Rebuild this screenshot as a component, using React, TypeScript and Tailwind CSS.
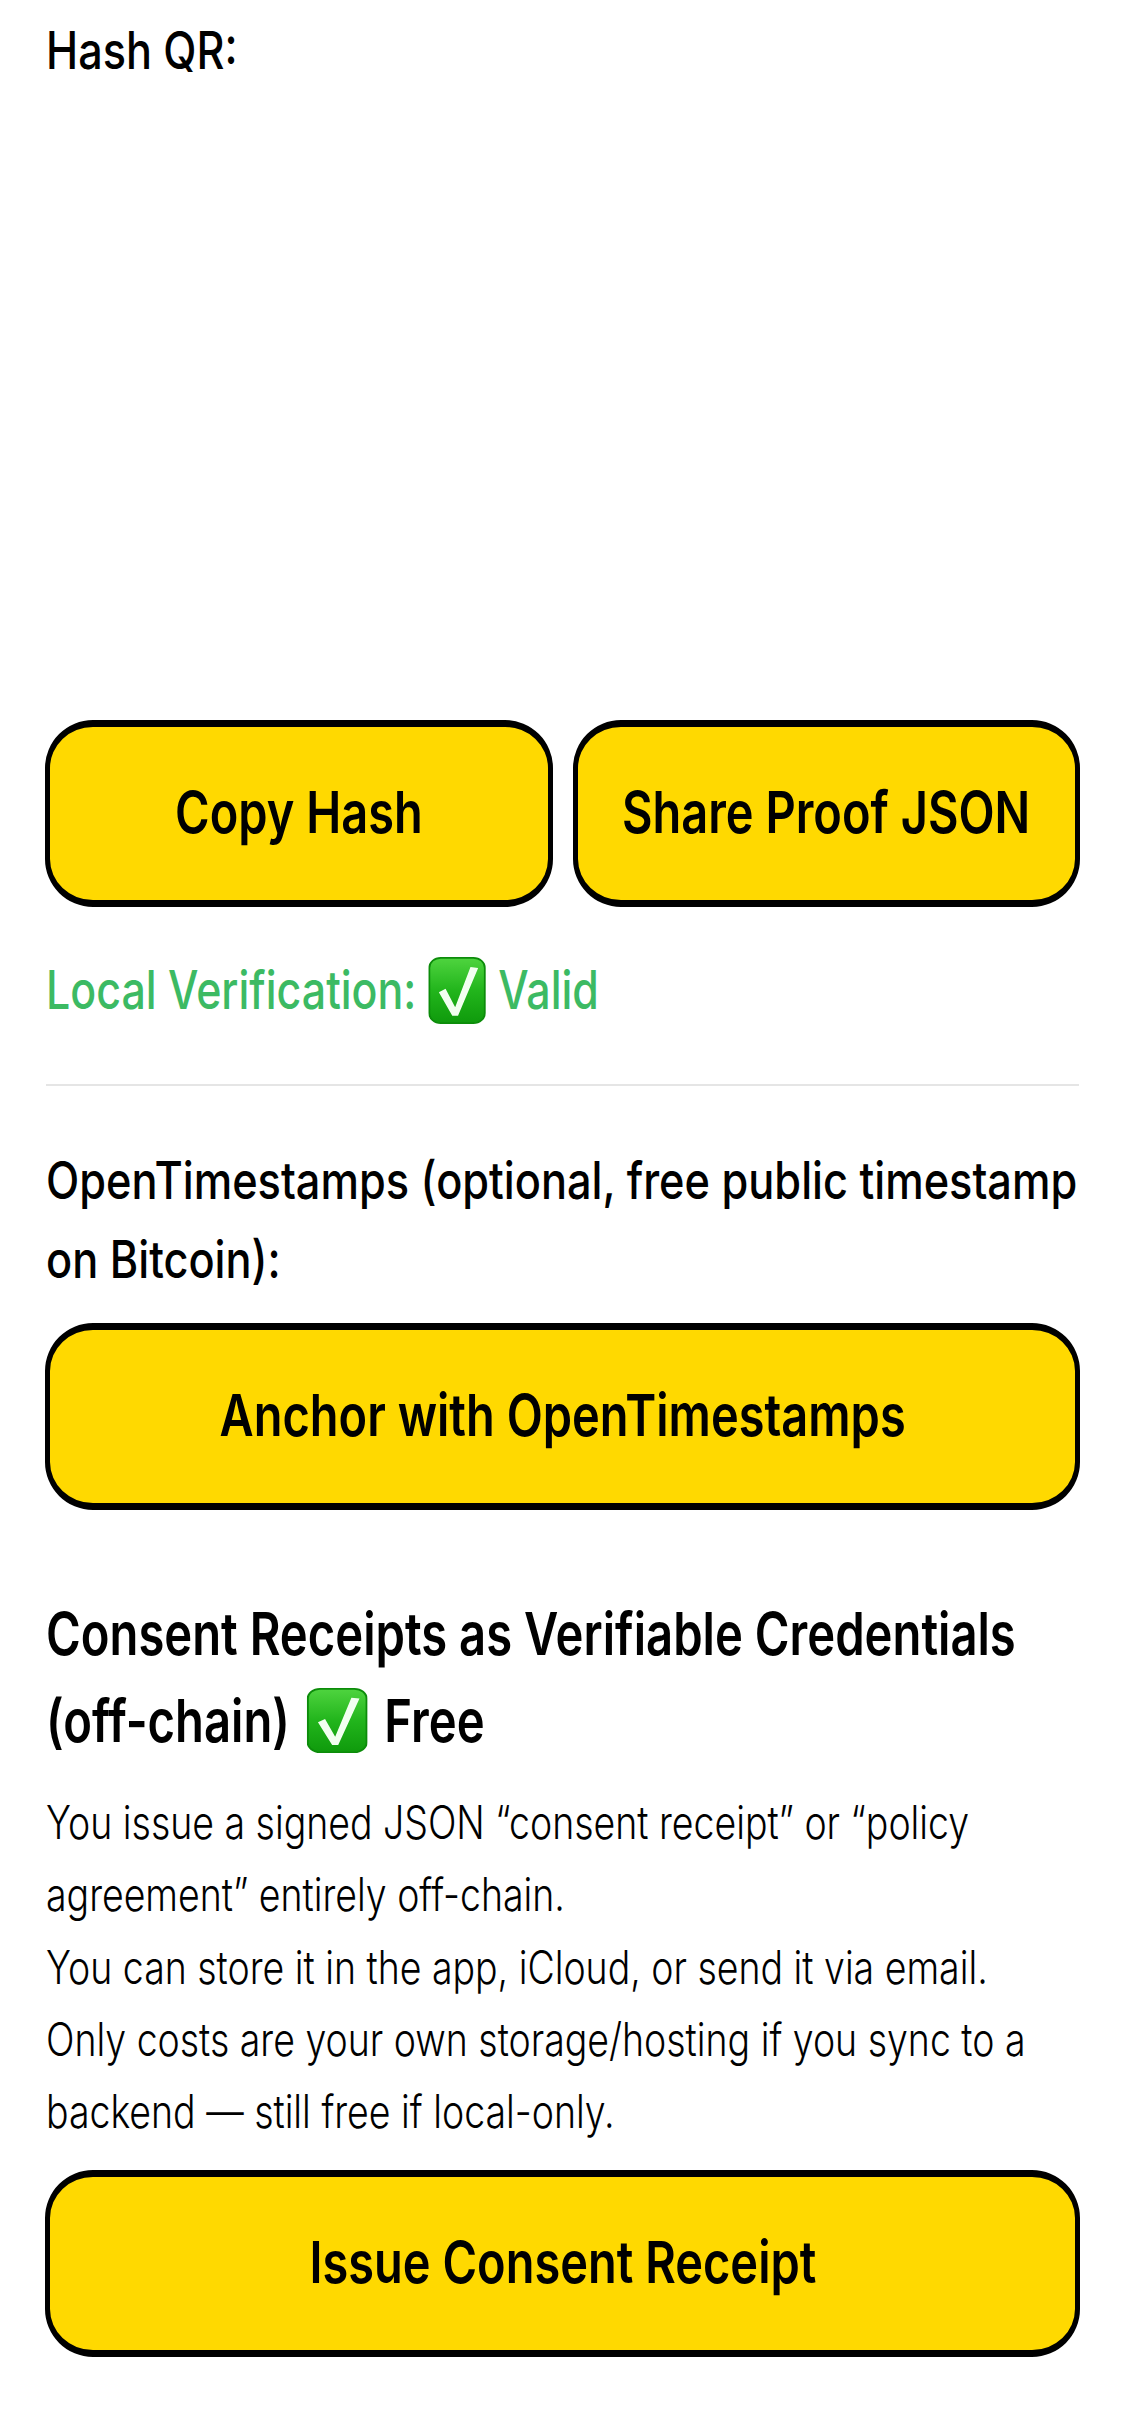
function Check({ className }: { className: string }) {
  return (
    <svg viewBox="0 0 60 80" preserveAspectRatio="none" className={className} aria-hidden="true">
      <defs>
        <linearGradient id="g" x1="0" y1="0" x2="0" y2="1">
          <stop offset="0" stopColor="#4fd43f" />
          <stop offset="0.5" stopColor="#22b51c" />
          <stop offset="1" stopColor="#0f9a0c" />
        </linearGradient>
      </defs>
      <rect x="1" y="1" width="58" height="78" rx="12" fill="url(#g)" stroke="#0c8c0a" strokeWidth="2" />
      <path d="M11 42 L18 38 L28 60 L44 12 L52 13 L31 70 L25 70 Z" fill="#f2fff0" />
    </svg>
  );
}

function Btn({ children, className = "" }: { children: string; className?: string }) {
  return (
    <button className={`flex h-[187px] min-w-0 items-center justify-center rounded-[48px] border-x-[5px] border-y-[7px] border-black bg-[#ffd900] pb-[3px] text-[58px] leading-none font-semibold text-black ${className}`}>
      <span className="inline-block scale-x-[.81] whitespace-nowrap">{children}</span>
    </button>
  );
}

export default function App() {
  return (
    <div className="min-h-[2436px] w-[1125px] overflow-hidden bg-white px-[46px] text-black font-['Inter',sans-serif]">
      <p className="h-[720px] w-[1200px] origin-left scale-x-[.83] pt-[21px] text-[52px] leading-[60px] font-medium">Hash QR:</p>
      <div className="-mx-[1px] grid grid-cols-2 gap-[20px]">
        <Btn>Copy Hash</Btn>
        <Btn>Share Proof JSON</Btn>
      </div>
      <p className="mt-[48px] flex h-[70px] w-[1200px] origin-left scale-x-[.81] items-center gap-[15px] text-[53px] leading-[70px] font-medium text-[#3cba63]">
        <span>Local Verification:</span>
        <Check className="h-[67px] w-[71px]" />
        <span>Valid</span>
      </p>
      <div className="mt-[59px] h-[2px] bg-[#e5e5e5]" />
      <p className="mt-[55px] w-[1300px] origin-left scale-x-[.833] text-[52px] leading-[79px] font-medium">
        OpenTimestamps (optional, free public timestamp
        <br />
        on Bitcoin):
      </p>
      <Btn className="-mx-[1px] mt-[24px] w-[1035px]">Anchor with OpenTimestamps</Btn>
      <h2 className="mt-[80px] w-[1300px] origin-left scale-x-[.8] text-[59px] leading-[87px] font-semibold">
        Consent Receipts as Verifiable Credentials
        <br />
        <span className="inline-flex items-center gap-[21px]">
          (off-chain)
          <Check className="h-[65px] w-[76px]" />
          Free
        </span>
      </h2>
      <p className="mt-[22px] w-[1300px] origin-left scale-x-[.814] text-[46px] leading-[72.3px] font-light">
        You issue a signed JSON “consent receipt” or “policy
        <br />
        agreement” entirely off-chain.
        <br />
        You can store it in the app, iCloud, or send it via email.
        <br />
        Only costs are your own storage/hosting if you sync to a
        <br />
        backend — still free if local-only.
      </p>
      <Btn className="-mx-[1px] mt-[23px] w-[1035px]">Issue Consent Receipt</Btn>
    </div>
  );
}
